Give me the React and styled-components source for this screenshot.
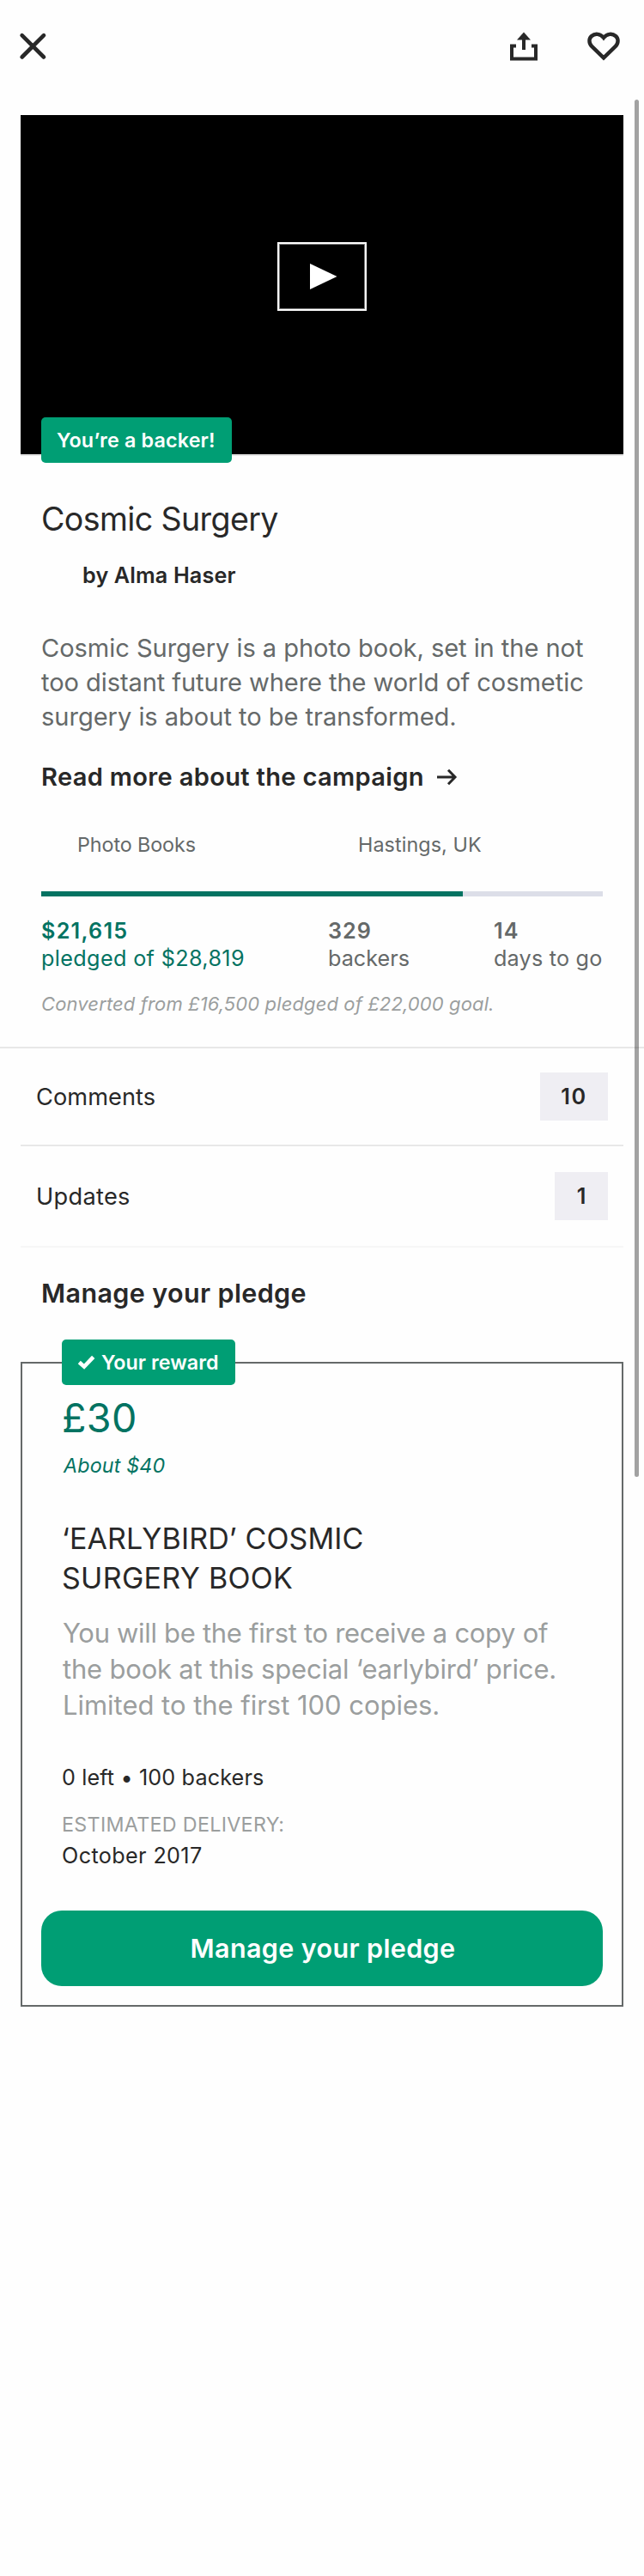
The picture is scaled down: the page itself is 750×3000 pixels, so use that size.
import React from 'react';
import styled, { createGlobalStyle, css } from 'styled-components';

const ink = '#282828';
const slate = '#656969';
const muted = '#9b9e9e';
const green = '#009e74';
const deepGreen = '#037362';

const GlobalStyle = createGlobalStyle`
  * { box-sizing: border-box; }
  body {
    margin: 0;
    background: #fefefe;
    color: ${ink};
    font-family: Inter, "Liberation Sans", sans-serif;
  }
  h1, h2, h3, p { margin: 0; font-weight: 400; }
  button { border: 0; padding: 0; background: none; font: inherit; color: inherit; }
  svg { display: block; overflow: visible; }
`;

const Page = styled.main`
  position: relative;
  width: 750px;
  min-height: 3000px;
`;

const ScrollThumb = styled.div`
  position: absolute;
  top: 116px;
  right: 6px;
  width: 5px;
  height: 1604px;
  border-radius: 3px;
  background: rgba(0, 0, 0, 0.36);
`;

const TopBar = styled.header`
  display: flex;
  align-items: flex-start;
  height: 134px;
  padding: 34px 27px 0 20px;
`;

const IconButton = styled.button`
  width: 40px;
  height: 40px;
`;

const Actions = styled.div`
  display: flex;
  gap: 53px;
  margin-left: auto;
`;

const Video = styled.section`
  position: relative;
  display: flex;
  justify-content: center;
  height: 397px;
  margin: 0 24px;
  padding-top: 148px;
  background: #000;
  border-bottom: 2px solid #e4e4e4;
`;

const PlayButton = styled.button`
  display: flex;
  align-items: center;
  justify-content: center;
  width: 104px;
  height: 80px;
  border: 2px solid #fff;
  box-shadow: inset 0 0 0 1px #777;
`;

const Flag = styled.div`
  position: absolute;
  top: ${(p) => p.$top}px;
  left: ${(p) => p.$left}px;
  display: flex;
  align-items: center;
  gap: 6px;
  width: ${(p) => p.$width}px;
  height: 53px;
  padding-left: 18px;
  border-radius: 5px;
  background: ${green};
  color: #fff;
  font-size: 23.3px;
  font-weight: 600;
  letter-spacing: ${(p) => p.$track || 0}px;
  white-space: nowrap;
`;

const Summary = styled.section`
  padding: 50px 48px 36px;
  border-bottom: 2px solid #e8e8e8;
`;

const Title = styled.h1`
  font-size: 37.6px;
  line-height: 48px;
  letter-spacing: -0.62px;
`;

const Author = styled.p`
  margin-top: 25px;
  padding-left: 48px;
  font-size: 25.2px;
  font-weight: 600;
  line-height: 32px;
  letter-spacing: 0.14px;
`;

const TextLine = styled.span`
  display: block;
  white-space: nowrap;
  letter-spacing: ${(p) => p.$track}px;
`;

const Blurb = styled.p`
  margin-top: 49px;
  color: ${slate};
  font-size: 29.1px;
  line-height: 40px;
`;

const ReadMore = styled.a`
  display: flex;
  align-items: center;
  gap: 14px;
  margin-top: 30px;
  font-size: 29.1px;
  font-weight: 600;
  line-height: 40px;
  letter-spacing: 0.31px;
`;

const Tags = styled.div`
  display: grid;
  grid-template-columns: 327px 1fr;
  margin-top: 43px;
  color: ${slate};
  font-size: 23.3px;
  line-height: 32px;
`;

const Tag = styled.span`
  padding-left: 42px;
  letter-spacing: ${(p) => p.$track}px;
`;

const Progress = styled.div`
  height: 6px;
  margin-top: 38px;
  background: #dcdee8;
`;

const ProgressFill = styled.div`
  width: 75%;
  height: 100%;
  background: ${deepGreen};
`;

const Stats = styled.div`
  display: grid;
  grid-template-columns: 334px 193px 1fr;
  margin-top: 24px;
  font-size: 25.2px;
  line-height: 32px;
`;

const Stat = styled.div`
  color: ${(p) => (p.$accent ? deepGreen : slate)};
  white-space: nowrap;
  b { display: block; font-weight: 600; letter-spacing: ${(p) => p.$valueTrack}px; }
  span { display: block; letter-spacing: ${(p) => p.$track}px; }
`;

const Conversion = styled.p`
  margin-top: 23px;
  color: ${muted};
  font-size: 22px;
  font-style: italic;
  line-height: 28px;
  letter-spacing: 0.12px;
  white-space: nowrap;
`;

const MenuRow = styled.div`
  display: flex;
  align-items: center;
  justify-content: space-between;
  height: ${(p) => p.$height}px;
  margin: 0 24px;
  padding: 0 18px;
  border-bottom: 2px solid ${(p) => p.$line};
  font-size: 27.2px;
  letter-spacing: ${(p) => p.$track}px;
`;

const Count = styled.span`
  display: flex;
  align-items: center;
  justify-content: center;
  width: ${(p) => p.$width}px;
  height: 56px;
  background: #efeef3;
  font-size: 25.2px;
  font-weight: 600;
  letter-spacing: ${(p) => p.$track || 0}px;
`;

const strong = css`
  font-size: 30.5px;
  font-weight: 600;
  letter-spacing: 0.37px;
`;

const SectionTitle = styled.h2`
  ${strong}
  margin: 33px 48px 0;
  line-height: 40px;
`;

const RewardCard = styled.section`
  position: relative;
  margin: 60px 24px 0;
  padding: 35px 22px 22px;
  border: 2px solid ${slate};
`;

const RewardBody = styled.div`
  padding: 0 24px;
`;

const Price = styled.p`
  color: ${deepGreen};
  font-size: 46.6px;
  line-height: 56px;
  letter-spacing: 0.38px;
`;

const PriceNote = styled.p`
  margin-top: 12px;
  padding-left: 2px;
  color: ${deepGreen};
  font-size: 23.3px;
  font-style: italic;
  line-height: 32px;
  letter-spacing: 0.16px;
`;

const RewardTitle = styled.h3`
  margin-top: 46px;
  font-size: 34px;
  line-height: 46px;
`;

const RewardText = styled.p`
  margin-top: 20px;
  padding-left: 1px;
  color: ${muted};
  font-size: 31px;
  line-height: 42px;
`;

const Availability = styled.p`
  margin-top: 47px;
  font-size: 25.2px;
  line-height: 32px;
  letter-spacing: 0.13px;
`;

const DeliveryLabel = styled.p`
  margin: 23px 0 4px;
  color: ${muted};
  font-size: 23.3px;
  line-height: 32px;
  letter-spacing: 0.3px;
`;

const DeliveryDate = styled.p`
  font-size: 25.2px;
  line-height: 32px;
  letter-spacing: 0.37px;
`;

const PledgeButton = styled.button`
  && {
    ${strong}
    display: flex;
    align-items: center;
    justify-content: center;
    width: 100%;
    height: 88px;
    margin-top: 48px;
    padding: 0 0 2px 2px;
    border-radius: 24px;
    background: ${green};
    color: #fff;
  }
`;

const CloseIcon = () => (
  <svg width="40" height="40" viewBox="0 0 40 40" stroke={ink} strokeWidth="4.6" strokeLinecap="round">
    <path d="M5.6 7.2L31 32.5M31 7.2L5.6 32.5" />
  </svg>
);

const ShareIcon = () => (
  <svg width="40" height="40" viewBox="0 0 40 40" fill="none" stroke={ink} strokeWidth="4">
    <path d="M11 19.5H6V34.5H34V19.5H29" />
    <path d="M20 24V10" />
    <path d="M20 3.5L28 12.5H12Z" fill={ink} stroke="none" />
  </svg>
);

const HeartIcon = () => (
  <svg width="40" height="40" viewBox="0 0 40 40" fill="none" stroke={ink} strokeWidth="4.4">
    <path d="M20 33.4L6.4 20.2C2.4 16 2.6 11 6 8C10 4.5 16 5 20 10C24 5 30 4.5 34 8C37.4 11 37.6 16 33.6 20.2Z" />
  </svg>
);

const PlayIcon = () => (
  <svg width="32" height="32" viewBox="0 0 32 32">
    <path d="M2 1L33.5 16L2 31Z" fill="#fff" />
  </svg>
);

const ArrowIcon = () => (
  <svg width="24" height="20" viewBox="0 0 24 20" fill="none" stroke={ink} strokeWidth="3">
    <path d="M1 10H21.5M14 1.7L22 10L14 18.3" />
  </svg>
);

const CheckIcon = () => (
  <svg width="22" height="20" viewBox="0 0 22 20" fill="none" stroke="#fff" strokeWidth="4.6">
    <path d="M2.3 9.5L8 14.6L18.7 3.3" />
  </svg>
);

export default function App() {
  return (
    <>
      <GlobalStyle />
      <Page>
        <TopBar>
          <IconButton aria-label="Close"><CloseIcon /></IconButton>
          <Actions>
            <IconButton aria-label="Share"><ShareIcon /></IconButton>
            <IconButton aria-label="Save"><HeartIcon /></IconButton>
          </Actions>
        </TopBar>

        <Video>
          <PlayButton aria-label="Play"><PlayIcon /></PlayButton>
          <Flag $top={352} $left={24} $width={222} $track={0.17}>You’re a backer!</Flag>
        </Video>

        <Summary>
          <Title>Cosmic Surgery</Title>
          <Author>by Alma Haser</Author>
          <Blurb>
            <TextLine $track={-0.07}>Cosmic Surgery is a photo book, set in the not</TextLine>
            <TextLine $track={-0.09}>too distant future where the world of cosmetic</TextLine>
            <TextLine $track={-0.05}>surgery is about to be transformed.</TextLine>
          </Blurb>
          <ReadMore>
            Read more about the campaign
            <ArrowIcon />
          </ReadMore>
          <Tags>
            <Tag $track={-0.08}>Photo Books</Tag>
            <Tag $track={0.1}>Hastings, UK</Tag>
          </Tags>
          <Progress><ProgressFill /></Progress>
          <Stats>
            <Stat $accent $valueTrack={1.25} $track={0.36}><b>$21,615</b><span>pledged of $28,819</span></Stat>
            <Stat $valueTrack={1} $track={0}><b>329</b><span>backers</span></Stat>
            <Stat $valueTrack={1} $track={0.2}><b>14</b><span>days to go</span></Stat>
          </Stats>
          <Conversion>Converted from £16,500 pledged of £22,000 goal.</Conversion>
        </Summary>

        <MenuRow $height={114} $line="#e8e8e8" $track={0.05}>
          Comments
          <Count $width={79} $track={1.5}>10</Count>
        </MenuRow>
        <MenuRow $height={118} $line="#f6f6f6" $track={0.3}>
          Updates
          <Count $width={62}>1</Count>
        </MenuRow>

        <SectionTitle>Manage your pledge</SectionTitle>

        <RewardCard>
          <Flag $top={-28} $left={46} $width={202} $track={0.03}>
            <CheckIcon />
            Your reward
          </Flag>
          <RewardBody>
            <Price>£30</Price>
            <PriceNote>About $40</PriceNote>
            <RewardTitle>
              <TextLine $track={0.12}>‘EARLYBIRD’ COSMIC</TextLine>
              <TextLine $track={0.3}>SURGERY BOOK</TextLine>
            </RewardTitle>
            <RewardText>
              <TextLine $track={-0.31}>You will be the first to receive a copy of</TextLine>
              <TextLine $track={-0.2}>the book at this special ‘earlybird’ price.</TextLine>
              <TextLine $track={-0.03}>Limited to the first 100 copies.</TextLine>
            </RewardText>
            <Availability>0 left • 100 backers</Availability>
            <DeliveryLabel>ESTIMATED DELIVERY:</DeliveryLabel>
            <DeliveryDate>October 2017</DeliveryDate>
          </RewardBody>
          <PledgeButton>Manage your pledge</PledgeButton>
        </RewardCard>

        <ScrollThumb />
      </Page>
    </>
  );
}
